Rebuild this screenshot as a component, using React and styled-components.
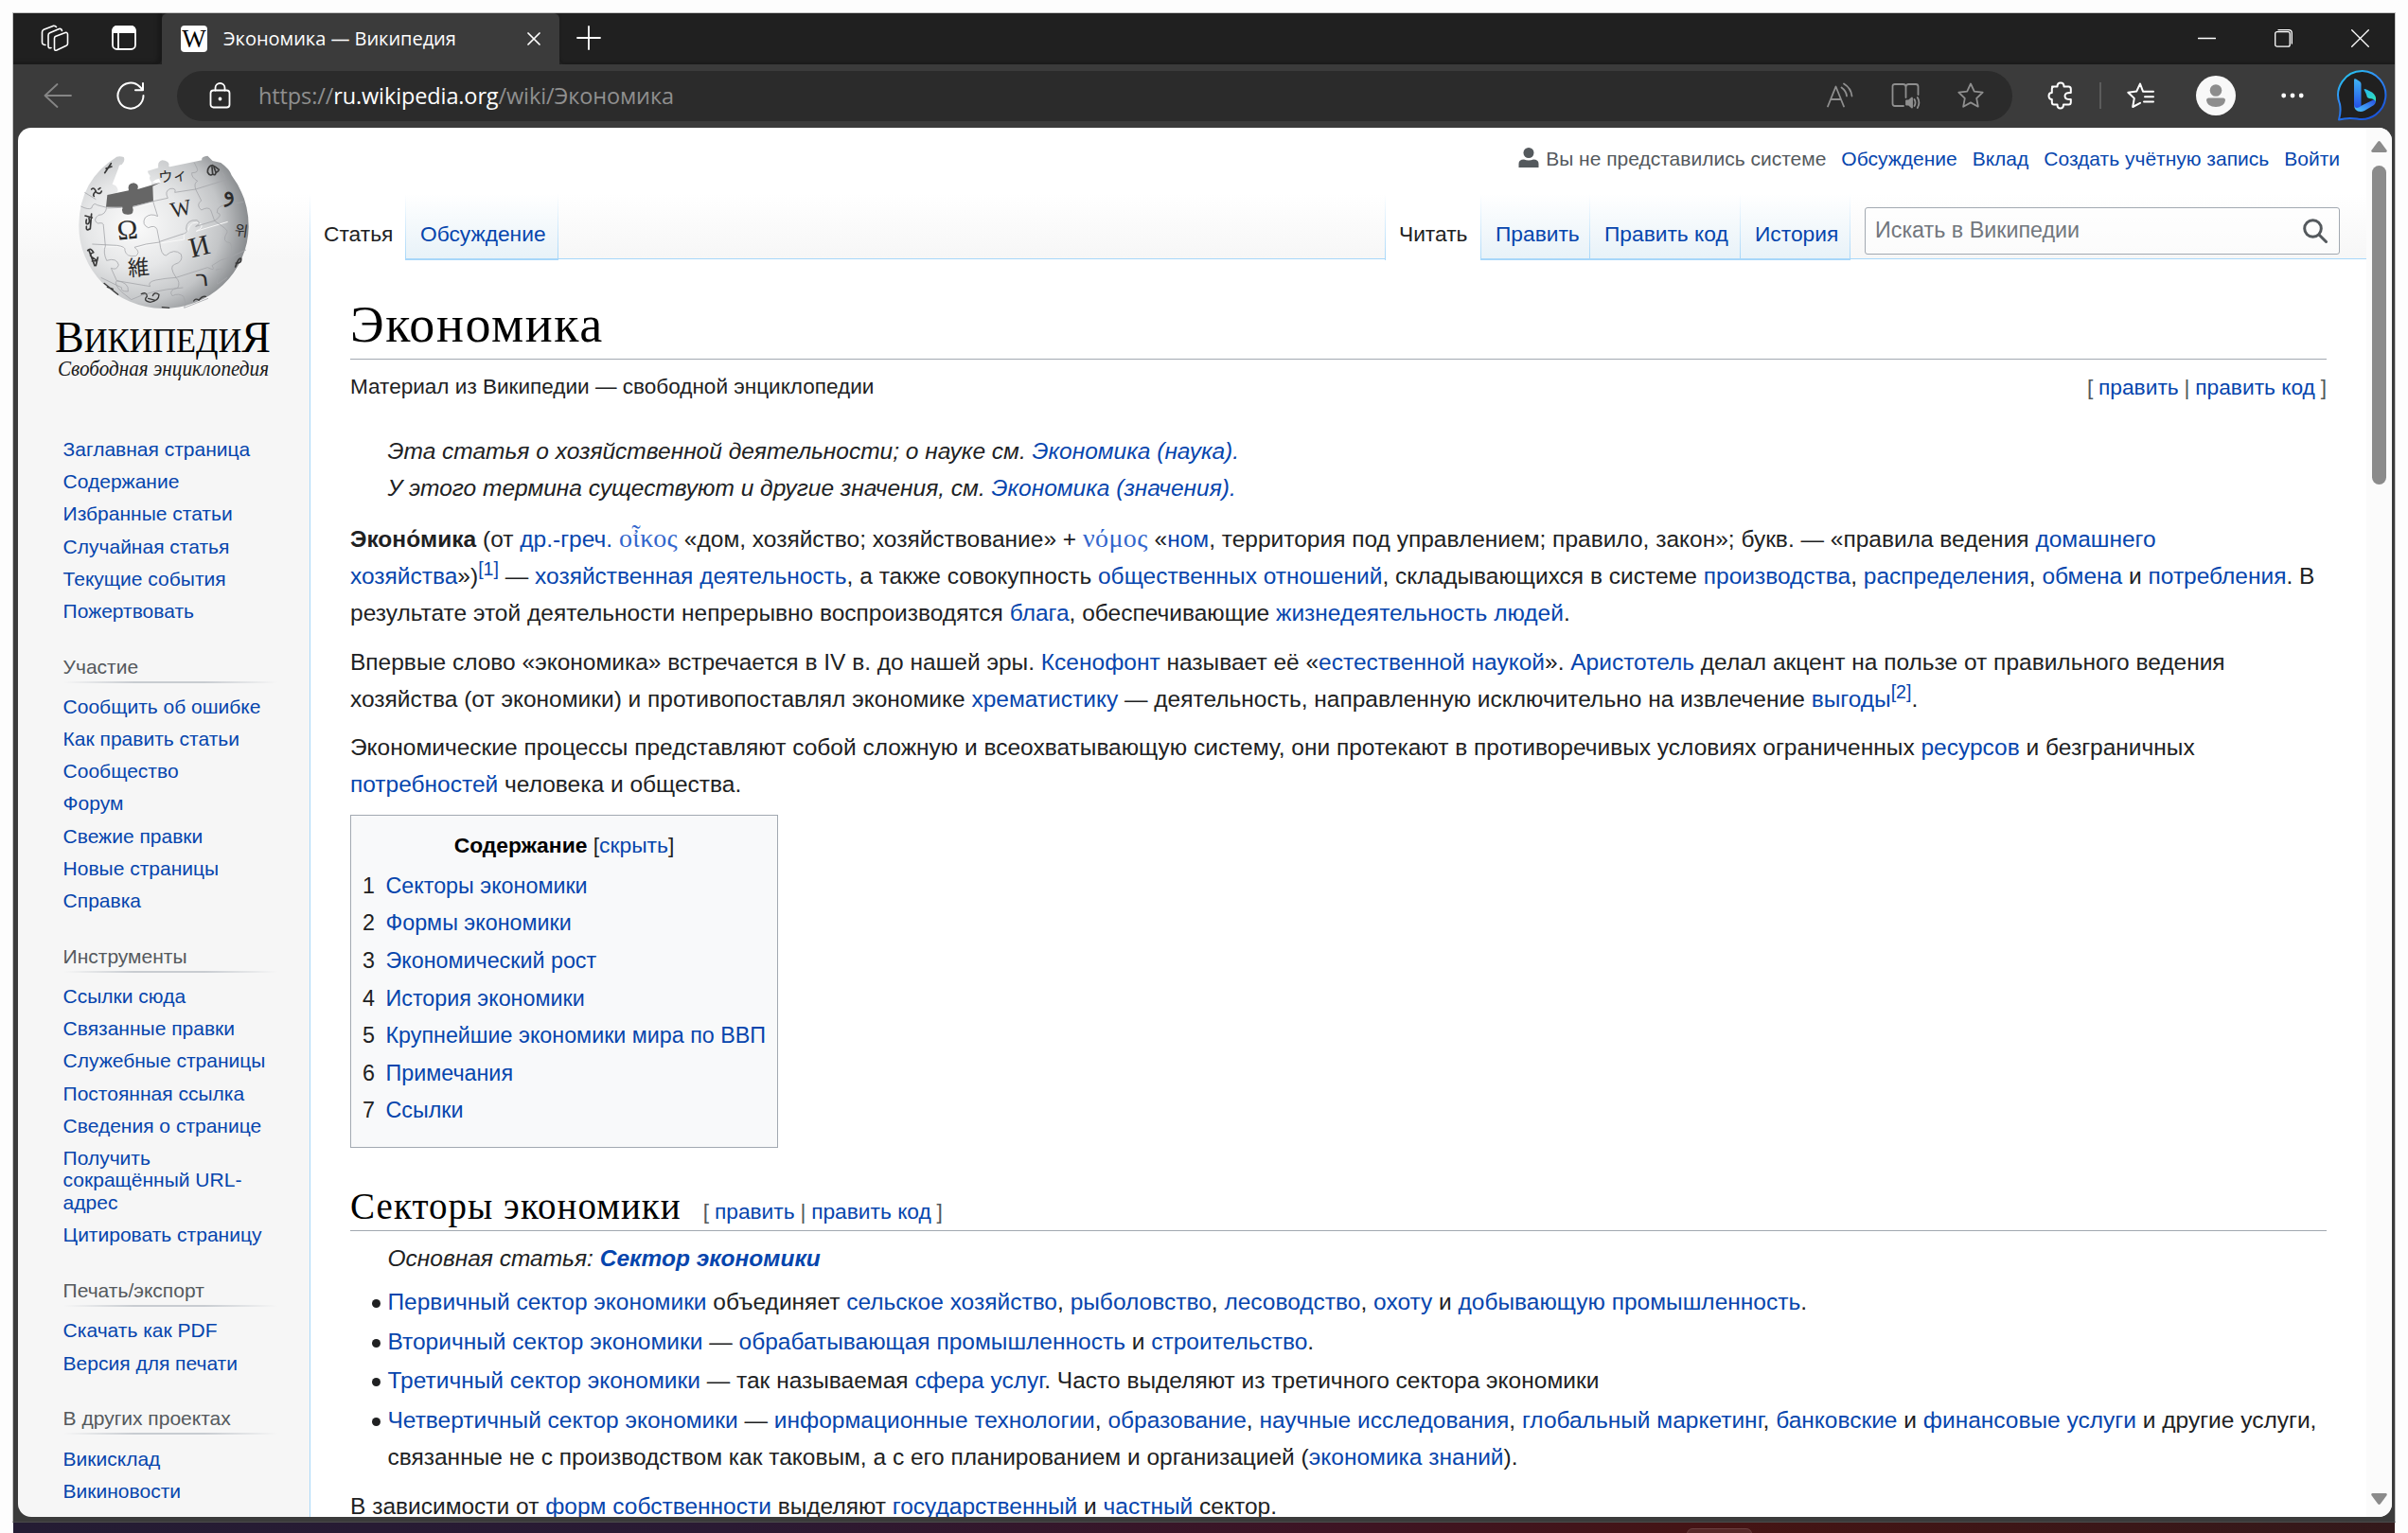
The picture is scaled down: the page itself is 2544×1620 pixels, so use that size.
import React from 'react';
import styled, { createGlobalStyle, css } from 'styled-components';

const SANS = '"Liberation Sans", Arial, sans-serif';
const SERIF = '"Liberation Serif", Georgia, serif';
const UI = '"Open Sans", "Noto Sans", sans-serif';
const LINK = '#0645ad';
const LINE = '#a7d7f9';

const Global = createGlobalStyle`
  * { box-sizing: border-box; }
  html, body { margin: 0; padding: 0; background: #fff; overflow: hidden; }
  svg { display: block; flex: none; }
`;

const Screen = styled.div`
  width: 2544px;
  height: 1620px;
  padding: 13px 13px 0;
  background: #fdfdfd;
  overflow: hidden;
  display: flex;
  flex-direction: column;
`;

const Window = styled.div`
  height: 1596px;
  flex: none;
  background: #3b3b3b;
  border: 1px solid #c3c3c3;
  border-bottom-color: #4a4a4a;
  display: flex;
  flex-direction: column;
`;

const TitleBar = styled.div`
  height: 54px;
  flex: none;
  display: flex;
  background: #202020;
`;

const TitleTools = styled.div`
  width: 157px;
  padding: 12px 0 0 29px;
  display: flex;
  gap: 45px;
  border-bottom-right-radius: 6px;
  box-shadow: inset -4px -2px 4px rgba(0, 0, 0, 0.25);
`;

const TabCard = styled.div`
  width: 420px;
  height: 54px;
  padding: 0 20px;
  display: flex;
  align-items: center;
  background: #3b3b3b;
  border-radius: 6px 6px 0 0;
`;

const Favicon = styled.span`
  width: 28px;
  height: 28px;
  margin-bottom: 1px;
  border-radius: 4px;
  background: #fff;
  color: #000;
  font: 27px/28px ${SERIF};
  text-align: center;
  display: flex;
  justify-content: center;
`;

const TabTitle = styled.span`
  margin-left: 17px;
  margin-bottom: 1px;
  flex: 1;
  color: #fff;
  font: 20px/30px ${UI};
  letter-spacing: -0.03px;
  white-space: nowrap;
`;

const TitleRest = styled.div`
  flex: 1;
  display: flex;
  justify-content: space-between;
  padding: 13px 27px 0 18px;
  border-bottom-left-radius: 6px;
  box-shadow: inset 0 -2px 3px rgba(0, 0, 0, 0.2);
`;

const WindowButtons = styled.div`
  display: flex;
  gap: 62px;
  padding-top: 4px;
`;

const Toolbar = styled.div`
  height: 67px;
  flex: none;
  display: flex;
  align-items: center;
  padding: 0 5px 1px 32px;
`;

const Spaced = styled.div`
  margin-left: ${(p) => p.$ml}px;
  flex: none;
`;

const UrlField = styled.div`
  width: 1939px;
  flex: none;
  height: 53px;
  margin-left: 34px;
  padding: 0 30px 0 34px;
  border-radius: 27px;
  background: #2b2b2b;
  display: flex;
  align-items: center;
`;

const Url = styled.div`
  flex: 1;
  margin-left: 29px;
  color: #8f8f8f;
  font: 23.5px/34px ${UI};
  letter-spacing: -0.12px;
  white-space: nowrap;
  b { font-weight: 400; color: #fff; }
`;

const ToolDivider = styled.div`
  width: 2px;
  height: 28px;
  margin-left: 28px;
  background: #5c5c5c;
`;

const Page = styled.div`
  height: 1468px;
  flex: none;
  margin: 0 3px 0 5px;
  border-radius: 14px;
  overflow: hidden;
  display: flex;
  background: linear-gradient(#fff 70px, #f6f6f6 140px);
  font-family: ${SANS};
`;

const Sidebar = styled.aside`
  width: 308px;
  flex: none;
`;

const Nav = styled.nav`
  padding: 23px 0 0 47.6px;
`;

const Portal = styled.section`
  & + & { padding-top: 24px; }
`;

const PortalTitle = styled.h3`
  margin: 0 0 8.4px;
  width: 226px;
  height: 35px;
  font-weight: 400;
  font-size: 21px;
  line-height: 35px;
  color: #54595d;
  background: linear-gradient(to right, rgba(200, 204, 209, 0), #c8ccd1 33%, #c8ccd1 66%, rgba(200, 204, 209, 0)) 0 100% / 100% 2px no-repeat;
`;

const NavItem = styled.a`
  display: block;
  width: 226px;
  padding: 5.25px 0;
  font-size: 21px;
  line-height: 23.6px;
  color: ${LINK};
`;

const Main = styled.main`
  flex: 1;
  min-width: 0;
  display: flex;
  flex-direction: column;
`;

const Personal = styled.div`
  height: 70px;
  flex: none;
  display: flex;
  justify-content: flex-end;
  gap: 16px;
  padding: 21px 28px 0 0;
  font-size: 21px;
  line-height: 24px;
  color: ${LINK};
  white-space: nowrap;
`;

const Anonymous = styled.span`
  display: flex;
  gap: 7px;
  color: #54595d;
`;

const TabsRow = styled.div`
  height: 70px;
  flex: none;
  margin-bottom: -2px;
  position: relative;
  display: flex;
  justify-content: space-between;
`;

const TabGroup = styled.div`
  display: flex;
`;

const PageTab = styled.div`
  height: 70px;
  width: ${(p) => p.$w}px;
  padding: 28px 0 0 15px;
  font-size: 22.75px;
  line-height: 28px;
  white-space: nowrap;
  color: ${(p) => (p.$on ? '#202122' : LINK)};
  ${(p) =>
    p.$on
      ? css`background: linear-gradient(#fff, ${LINE}) 0 0 / 1px 100% no-repeat, linear-gradient(#fff, ${LINE}) 100% 0 / 1px 100% no-repeat, #fff;`
      : css`
          background: linear-gradient(#fff, ${LINE}) 100% 0 / 1px 100% no-repeat, linear-gradient(#fff, #e8f2f8);
          border-bottom: 2px solid ${LINE};
        `}
`;

const RightTools = styled.div`
  display: flex;
  padding-right: 28px;
`;

const Search = styled.div`
  width: 502px;
  height: 50px;
  margin: 14px 0 0 15px;
  padding: 0 12px 1px 10px;
  border: 1px solid #a2a9b1;
  border-radius: 3px;
  background: rgba(255, 255, 255, 0.5);
  display: flex;
  align-items: center;
  justify-content: space-between;
  font-size: 23.3px;
  color: #72777d;
`;

const Article = styled.article`
  flex: 1;
  padding: 36px 42px 0;
  background: #fff;
  border-left: 1px solid ${LINE};
  border-top: 1px solid ${LINE};
  color: #202122;
  font-size: 24.5px;
  line-height: 39.2px;
  a { color: ${LINK}; }
  p { margin: 12.25px 0; }
  sup { font-size: 19.6px; line-height: 1; vertical-align: super; color: ${LINK}; }
`;

const Heading = styled.div`
  display: flex;
  align-items: baseline;
  height: ${(p) => p.$h}px;
  border-bottom: 1px solid #a2a9b1;
  h1, h2 {
    margin: 0;
    font-family: ${SERIF};
    font-weight: 400;
    color: #000;
    font-size: ${(p) => p.$size}px;
    line-height: ${(p) => p.$lh}px;
    letter-spacing: ${(p) => p.$ls}px;
  }
`;

const Edit = styled.span`
  margin-left: ${(p) => p.$ml || 0}px;
  padding-top: ${(p) => p.$pt || 0}px;
  font-size: 22.75px;
  color: #54595d;
  white-space: pre;
  i { font-style: normal; padding: 0 5.8px; }
`;

const Tagline = styled.div`
  display: flex;
  justify-content: space-between;
  padding-top: 9px;
  height: 77px;
  font-size: 22.56px;
`;

const Hatnote = styled.div`
  padding-left: 39.5px;
  font-style: italic;
`;

const Lead = styled.div`
  padding-top: 2px;
  overflow: hidden;
  margin-bottom: 12.25px;
  p:last-child { margin-bottom: 0; }
`;

const Greek = styled.span`
  font-family: ${SERIF};
  font-size: 28px;
  letter-spacing: 0.4px;
  line-height: 1;
  color: #36c;
`;

const Toc = styled.div`
  width: 452px;
  height: 352px;
  padding: 12px 12px 0;
  border: 1px solid #a2a9b1;
  background: #f8f9fa;
`;

const TocTitle = styled.div`
  height: 43px;
  text-align: center;
  font-size: 22.85px;
  b { color: #000; }
`;

const TocRow = styled.div`
  display: grid;
  grid-template-columns: 24.5px 1fr;
  height: 39.6px;
  white-space: nowrap;
  font-size: 23.3px;
`;

const SectionNote = styled(Hatnote)`
  padding-top: 9px;
`;

const Bullets = styled.ul`
  margin: 7px 0 0 39.5px;
  padding: 0;
  list-style: none;
  li { margin-bottom: 2.45px; position: relative; }
  li::before {
    content: '';
    position: absolute;
    left: -17px;
    top: 17px;
    width: 9px;
    height: 9px;
    border-radius: 50%;
    background: #202122;
  }
`;

const ScrollTrack = styled.div`
  width: 27px;
  flex: none;
  background: #fbfbfb;
  display: flex;
  flex-direction: column;
  align-items: center;
  padding: 14px 1px 13px 0;
`;

const Thumb = styled.div`
  width: 15px;
  height: 337px;
  margin: 14px 0 auto;
  border-radius: 8px;
  background: #8b8b8b;
`;

const Desktop = styled.div`
  flex: 1;
  margin: 0 1px;
  padding: 6px 0 0 1768px;
  background: linear-gradient(to right, #241c33, #2a1a33 30%, #3d1424 55%, #451414 72%, #33191b);
`;

const TaskbarButton = styled.div`
  width: 69px;
  height: 12px;
  border-radius: 6px;
  border: 1px solid #6b4040;
  background: #552828;
`;

function rich(text) {
  return text.split(/(\[\[.*?\]\]|\{\{.*?\}\}|\^\^.*?\^\^)/).map((part, i) => {
    if (part.startsWith('[[')) return <a key={i}>{part.slice(2, -2)}</a>;
    if (part.startsWith('{{')) return <Greek key={i}>{part.slice(2, -2)}</Greek>;
    if (part.startsWith('^^')) return <sup key={i}>{part.slice(2, -2)}</sup>;
    return part;
  });
}

const Icon = ({ w = 28, h = 28, c = '#fff', sw = 1.8, children, vb }) => (
  <svg width={w} height={h} viewBox={vb || `0 0 ${w} ${h}`} fill="none" stroke={c} strokeWidth={sw} strokeLinecap="round" strokeLinejoin="round">
    {children}
  </svg>
);

const Workspaces = () => (
  <Icon w={30} h={29} sw={1.6}>
    <path d="M15.500 12.500 L26 8.500 Q28.500 8 28.500 10.500 V20 Q28.500 21.500 27 22.300 L17 27 Q14.500 28 14.500 25.500 V14.500 Q14.500 13 15.500 12.500Z" />
    <path d="M11 24.500 Q8 25.500 8 22.500 V11.500 Q8 9.500 9.500 8.800 L19.500 4.500 Q22 4 22.500 6.500" />
    <path d="M5 21.500 Q1.500 21.500 1.500 18.500 V8 Q1.500 6 3.200 5.200 L13 1.400 Q15 1 16.500 2.500" />
  </Icon>
);

const VerticalTabs = () => (
  <Icon w={26} h={27}>
    <rect x="1" y="2" width="24" height="24" rx="4.500" />
    <path d="M1.500 8 V6 Q1.500 2 6 2 H20 Q24.500 2 24.500 6 V8Z" fill="#fff" />
    <path d="M7 8 V26" />
  </Icon>
);

const starPath = 'M14 1.500 L17.800 9.600 L26.700 10.700 L20.200 16.900 L21.800 25.700 L14 21.400 L6.200 25.700 L7.800 16.900 L1.300 10.700 L10.200 9.600Z';

const Bing = () => (
  <svg width="56" height="58" viewBox="0 0 56 58">
    <defs>
      <linearGradient id="ring" x1="0" y1="0" x2="0.600" y2="1">
        <stop offset="0" stopColor="#25d3ee" />
        <stop offset="0.450" stopColor="#2f8cf5" />
        <stop offset="1" stopColor="#1a56dc" />
      </linearGradient>
      <linearGradient id="stem" x1="0" y1="0" x2="0" y2="1">
        <stop offset="0" stopColor="#3fb6f6" />
        <stop offset="1" stopColor="#2450e6" />
      </linearGradient>
      <linearGradient id="bowl" x1="0" y1="1" x2="1" y2="0">
        <stop offset="0" stopColor="#4cc8fa" />
        <stop offset="0.500" stopColor="#3a8cf2" />
        <stop offset="1" stopColor="#2547dc" />
      </linearGradient>
      <linearGradient id="leaf" x1="0" y1="0" x2="1" y2="1">
        <stop offset="0" stopColor="#28b4f0" />
        <stop offset="1" stopColor="#2ee6b4" />
      </linearGradient>
    </defs>
    <path d="M28 3 A25.500 25.500 0 1 1 22 53.500 Q12 52 3 54.500 Q5.500 46 4 38 A25.500 25.500 0 0 1 28 3Z" fill="#202020" stroke="url(#ring)" strokeWidth="2" strokeLinejoin="round" />
    <path d="M19 38 Q19 46 26 46 Q28 46 30 45 L40 39 Q43 36 41.500 32.500 L26 40Z" fill="url(#bowl)" />
    <path d="M29.500 22.500 Q30 21.500 32 22.500 L38 25.500 Q43 29 42 35.500 Q40.500 32 35 32 L33 31 Q32 27 29.500 22.500Z" fill="url(#leaf)" />
    <path d="M19 12.500 Q19 10.500 21 11.500 L25 14 Q26.500 15 26.500 17 V40 Q20 44.500 19 38.500Z" fill="url(#stem)" />
  </svg>
);

const globeGlyphs = [
  ['Ω', 227, 308, 88, -6, SERIF],
  ['W', 398, 234, 70, -12, SERIF],
  ['И', 459, 360, 90, -14, SERIF],
  ['維', 261, 422, 68, -5, '"Noto Sans CJK JP"'],
  ['ウィ', 370, 124, 46, -6, '"Noto Sans CJK JP"'],
  ['و', 548, 182, 80, -16, '"DejaVu Sans"'],
  ['위', 583, 298, 46, 8, '"Noto Sans CJK KR"'],
  ['ר', 463, 458, 72, -6, '"DejaVu Sans"'],
];

const Logo = () => (
  <svg width="308" height="300" viewBox="19 135 308 300">
    <defs>
      <radialGradient id="ball" cx="0.330" cy="0.450" r="0.680">
        <stop offset="0" stopColor="#fbfbfb" />
        <stop offset="0.420" stopColor="#e6e7e8" />
        <stop offset="0.750" stopColor="#c3c5c7" />
        <stop offset="1" stopColor="#85888b" />
      </radialGradient>
    </defs>
    <g transform="translate(60 150) scale(0.33333)">
      <path
        d="M190 47 Q200 44 212 48 Q218 60 206 72 Q196 72 196 82 L176 134 Q190 136 194 152 Q192 166 178 164 Q164 164 160 176 L158 208 L304 188 L300 128 L330 130 L324 116 Q312 118 302 128 Q290 120 296 108 Q288 100 288 92 L322 82 Q318 62 334 58 Q354 60 356 72 Q352 80 362 78 L460 58 Q456 46 478 44 L494 60 L520 66 Q548 86 554 106 A269 269 0 0 1 608 270 A269 262 0 1 1 70 262 Q72 120 190 47Z"
        fill="url(#ball)"
      />
      <path d="M160 168 L228 154 Q222 132 244 130 Q262 134 256 150 L330 128 L304 140 L306 188 L240 204 Q248 232 224 230 Q202 230 208 206 L156 206Z" fill="#666" />
      <g fill="none" stroke="#f8f8f8" strokeWidth="3" transform="translate(2 3)">
        <path d="M160 210 L206 208 M240 206 L305 190 L320 236 Q298 224 280 240 Q268 262 290 272 Q312 262 318 278 L326 318 Q280 322 246 334 Q268 350 250 362 Q220 366 216 344 Q220 332 190 328 L144 330" />
        <path d="M326 318 L402 306 Q396 286 412 280 Q424 240 456 258 Q462 270 440 280 L540 250" />
      </g>
      <g fill="none" stroke="#a3a5a8" strokeWidth="2.400" strokeLinejoin="round">
        <path d="M160 210 L206 208 M240 206 L305 188 L320 236 Q298 224 280 240 Q268 262 290 272 Q312 262 318 278 L326 318 Q280 322 246 334 Q268 350 250 362 Q220 366 216 344 Q220 332 190 328 L112 324" />
        <path d="M305 188 L352 178 Q340 156 360 148 Q380 146 374 160 L440 150 Q434 130 446 124 Q426 112 428 98 Q452 98 444 82 L436 66" />
        <path d="M440 150 L458 186 Q440 200 458 216 Q480 204 488 216 L500 250 L440 268 Q460 258 444 248 Q410 246 410 276 Q420 288 392 294 L326 316 Q330 360 346 360 Q372 336 394 356 Q402 380 374 388 Q354 394 378 430 Q344 432 314 438 Q286 444 296 458 L190 440" />
        <path d="M440 150 L530 122 Q536 108 524 96 M530 122 Q556 190 548 198 Q506 200 508 224 Q530 230 500 250 M548 198 L592 190 M500 250 Q546 280 540 286 Q520 318 550 320 Q560 346 548 366 Q520 370 492 392 Q506 412 478 398 L378 430 Q392 444 384 462 Q352 470 366 488 Q386 478 402 490 Q412 510 404 526" />
        <path d="M76 204 Q100 216 110 210 Q116 190 128 200 L158 208 Q154 232 132 232 Q112 248 130 258 Q150 254 148 266 L154 330 Q146 350 158 376 Q190 366 196 390 Q190 408 172 400 L190 440 Q230 446 226 474 Q200 474 206 462 L140 430 M190 440 Q180 450 206 476 L236 500 Q296 470 400 462 M88 160 L124 182 M548 366 L600 342 M504 406 Q524 398 530 410 Q500 440 510 450 L540 430 M404 526 L480 496" />
      </g>
      <g fill="#2b2b2b" textAnchor="middle">
        {globeGlyphs.map(([ch, x, y, size, rot, family]) => (
          <text key={ch} fontFamily={family} fontSize={size} transform={`translate(${x} ${y}) rotate(${rot})`}>{ch}</text>
        ))}
      </g>
      <g fill="none" stroke="#3a3a3a" strokeWidth="5" strokeLinecap="round">
        <path d="M478 96 Q478 76 494 74 Q504 78 514 88 M478 96 Q486 110 494 102 L492 80 M494 102 Q504 108 504 96 L498 80 M504 98 L512 92" />
        <path d="M152 98 L172 68 M156 84 L174 78 M110 150 Q118 142 124 156 Q112 168 118 172 M126 160 Q138 168 142 156 M132 150 L138 146" />
        <path d="M90 234 L112 240 M94 246 Q90 262 98 260 Q106 256 102 242 M94 268 Q92 284 104 276 M110 228 L106 276" />
        <path d="M98 344 Q108 334 116 350 Q100 356 110 364 L124 374 M102 344 L120 392 M112 378 L128 376 M130 366 L124 392" />
        <path d="M150 448 L194 484 M160 460 L178 466" strokeWidth="4" />
        <path d="M268 482 Q286 474 286 490 Q272 504 296 508 Q324 504 324 484 Q308 474 304 488 M290 496 L312 502" strokeWidth="4" />
        <path d="M334 524 L356 526 M434 504 Q440 494 450 502 Q460 488 472 490" strokeWidth="4" />
        <path d="M566 396 Q576 366 584 370 Q586 386 568 384" strokeWidth="5" />
      </g>
    </g>
    <g fill="#000" fontFamily={SERIF}>
      <text x="58" y="372" fontSize="47" textLength="228" lengthAdjust="spacingAndGlyphs">
        В<tspan fontSize="35">ИКИПЕДИ</tspan>Я
      </text>
      <text x="61" y="397" fontSize="23.500" fontStyle="italic" fill="#1a1a1a" textLength="223" lengthAdjust="spacingAndGlyphs">Свободная энциклопедия</text>
    </g>
  </svg>
);

const portals = [
  [null, ['Заглавная страница', 'Содержание', 'Избранные статьи', 'Случайная статья', 'Текущие события', 'Пожертвовать']],
  ['Участие', ['Сообщить об ошибке', 'Как править статьи', 'Сообщество', 'Форум', 'Свежие правки', 'Новые страницы', 'Справка']],
  ['Инструменты', ['Ссылки сюда', 'Связанные правки', 'Служебные страницы', 'Постоянная ссылка', 'Сведения о странице', 'Получить сокращённый URL-адрес', 'Цитировать страницу']],
  ['Печать/экспорт', ['Скачать как PDF', 'Версия для печати']],
  ['В других проектах', ['Викисклад', 'Викиновости', 'Элемент Викиданных']],
];

const toc = ['Секторы экономики', 'Формы экономики', 'Экономический рост', 'История экономики', 'Крупнейшие экономики мира по ВВП', 'Примечания', 'Ссылки'];

const paragraphs = [
  ' (от [[др.-греч.]] {{οἶκος}} «дом, хозяйство; хозяйствование» + {{νόμος}} «[[ном]], территория под управлением; правило, закон»; букв. — «правила ведения [[домашнего хозяйства]]»)\u2060^^[1]^^\u00a0— [[хозяйственная деятельность]], а также совокупность [[общественных отношений]], складывающихся в системе [[производства]], [[распределения]], [[обмена]] и [[потребления]]. В результате этой деятельности непрерывно воспроизводятся [[блага]], обеспечивающие [[жизнедеятельность людей]].',
  'Впервые слово «экономика» встречается в IV в. до нашей эры. [[Ксенофонт]] называет её «[[естественной наукой]]». [[Аристотель]] делал акцент на пользе от правильного ведения хозяйства (от экономики) и противопоставлял экономике [[хрематистику]]\u00a0— деятельность, направленную исключительно на извлечение [[выгоды]]^^[2]^^.',
  'Экономические процессы представляют собой сложную и всеохватывающую систему, они протекают в противоречивых условиях ограниченных [[ресурсов]] и безграничных [[потребностей]] человека и общества.',
];

const bullets = [
  '[[Первичный сектор экономики]] объединяет [[сельское хозяйство]], [[рыболовство]], [[лесоводство]], [[охоту]] и [[добывающую промышленность]].',
  '[[Вторичный сектор экономики]]\u00a0— [[обрабатывающая промышленность]] и [[строительство]].',
  '[[Третичный сектор экономики]]\u00a0— так называемая [[сфера услуг]]. Часто выделяют из третичного сектора экономики',
  '[[Четвертичный сектор экономики]]\u00a0— [[информационные технологии]], [[образование]], [[научные исследования]], [[глобальный маркетинг]], [[банковские]] и [[финансовые услуги]] и другие услуги, связанные не с производством как таковым, а с его планированием и организацией ([[экономика знаний]]).',
];

const EditLinks = (props) => (
  <Edit {...props}>
    [<i><a>править</a></i>|<i><a>править код</a></i>]
  </Edit>
);

export default function App() {
  return (
    <Screen>
      <Global />
      <Window>
        <TitleBar>
          <TitleTools>
            <Workspaces />
            <VerticalTabs />
          </TitleTools>
          <TabCard>
            <Favicon>W</Favicon>
            <TabTitle>Экономика — Википедия</TabTitle>
            <Icon w={14} h={14} sw={1.7}><path d="M1 1 L13 13 M13 1 L1 13" /></Icon>
          </TabCard>
          <TitleRest>
            <Icon w={26} h={26} sw={1.8}><path d="M13 1 V25 M1 13 H25" /></Icon>
            <WindowButtons>
              <Icon w={19} h={19} sw={1.3}><path d="M0.500 9.500 H18.500" /></Icon>
              <Icon w={19} h={19} sw={1.3}>
                <rect x="0.700" y="2.700" width="15.500" height="15.500" rx="2" />
                <path d="M4 0.700 H15 Q18.300 0.700 18.300 4 V15" />
              </Icon>
              <Icon w={19} h={19} sw={1.3}><path d="M0.700 0.700 L18.300 18.300 M18.300 0.700 L0.700 18.300" /></Icon>
            </WindowButtons>
          </TitleRest>
        </TitleBar>
        <Toolbar>
          <Icon w={30} h={28} c="#858585"><path d="M29 14 H1.500 M14.500 2 L1.500 14 L14.500 26" /></Icon>
          <Spaced $ml={47}>
            <Icon w={30} h={30} sw={2}>
              <path d="M28.500 15 A13.500 13.500 0 1 1 24.500 5.500 L28 9 M28 2 V9.300 H20" />
            </Icon>
          </Spaced>
          <UrlField>
            <Icon w={23} h={28}>
              <rect x="1.500" y="8.500" width="20" height="18" rx="3" />
              <path d="M6.500 8.500 V6 A5 5 0 0 1 16.500 6 V8.500" />
              <circle cx="11.500" cy="17.500" r="1" fill="#fff" />
            </Icon>
            <Url>https://<b>ru.wikipedia.org</b>/wiki/Экономика</Url>
            <Icon w={28} h={28} c="#8f8f8f">
              <path d="M1 25.500 L9.500 4.500 L18 25.500 M4.200 18 H14.800 M15.500 5.500 Q20.500 9 21 14.500 M18 1.500 Q25.500 6 26.500 14.500" />
            </Icon>
            <Spaced $ml={40}>
              <Icon w={31} h={28} c="#8f8f8f">
                <path d="M13 25 H4 Q1.500 25 1.500 22.500 V4 Q1.500 2 4 2 H12.500 Q15.500 2 15.500 5 V16 M15.500 5 Q15.500 2 18.500 2 H26 Q28.500 2 28.500 4.500 V13 M24.500 18 Q26.500 21.500 24.500 25 M27.800 16 Q31 21.500 27.800 27" />
                <path d="M16 19.500 H18.500 L22 16.500 V26.500 L18.500 23.500 H16Z" fill="#8f8f8f" />
              </Icon>
            </Spaced>
            <Spaced $ml={39}>
              <Icon w={28} h={28} c="#8f8f8f"><path d={starPath} /></Icon>
            </Spaced>
          </UrlField>
          <Spaced $ml={37}>
            <Icon w={27} h={30} sw={2}>
              <path d="M5 5.500 H10.500 Q10.500 1.500 14 1.500 Q17.500 1.500 17.500 5.500 H22.500 Q24.800 5.500 24.800 8 V12 Q18.500 11.500 18.500 15.500 Q18.500 19.500 24.800 19 V22 Q24.800 24.500 22.500 24.500 H17 Q17 28.500 13.700 28.500 Q10.500 28.500 10.500 24.500 H7 Q4.800 24.500 4.800 22 V19 Q1.500 19 1.500 15.300 Q1.500 12 4.800 12 V8 Q4.800 5.500 7 5.500" />
            </Icon>
          </Spaced>
          <ToolDivider />
          <Spaced $ml={27}>
            <Icon w={29} h={28} sw={2}>
              <path d="M17 9.600 L14 1.500 L10.200 9.600 L1.300 10.700 L7.800 16.900 L6.200 26 L14 21.800 M18 9.800 H28 M19 15.200 H28 M18 20.600 H28" />
            </Icon>
          </Spaced>
          <Spaced $ml={44}>
            <svg width="42" height="42" viewBox="0 0 42 42">
              <circle cx="21" cy="21" r="21" fill="#f8f8f8" />
              <circle cx="21" cy="15.500" r="6.300" fill="#8d8d8d" />
              <path d="M11 26 Q11 23.500 13.500 23.500 H28.500 Q31 23.500 31 26 Q30 33 21 33 Q12 33 11 26Z" fill="#8d8d8d" />
            </svg>
          </Spaced>
          <Spaced $ml={48}>
            <svg width="24" height="6" viewBox="0 0 24 6" fill="#fff">
              <circle cx="2.700" cy="3" r="2.400" /><circle cx="12" cy="3" r="2.400" /><circle cx="21.200" cy="3" r="2.400" />
            </svg>
          </Spaced>
          <Spaced $ml={34}><Bing /></Spaced>
        </Toolbar>
        <Page>
          <Sidebar>
            <Logo />
            <Nav>
              {portals.map(([title, items], i) => (
                <Portal key={i}>
                  {title && <PortalTitle>{title}</PortalTitle>}
                  {items.map((t) => <NavItem key={t}>{t}</NavItem>)}
                </Portal>
              ))}
            </Nav>
          </Sidebar>
          <Main>
            <Personal>
              <Anonymous>
                <svg width="22" height="22" viewBox="0 0 22 22" fill="#54595d">
                  <circle cx="11" cy="5.500" r="5.500" />
                  <path d="M0.500 21 V17 Q0.500 12.500 6 12.500 Q11 14.500 16 12.500 Q21.500 12.500 21.500 17 V21Z" />
                </svg>
                Вы не представились системе
              </Anonymous>
              <span>Обсуждение</span>
              <span>Вклад</span>
              <span>Создать учётную запись</span>
              <span>Войти</span>
            </Personal>
            <TabsRow>
              <TabGroup>
                <PageTab $on $w={102}>Статья</PageTab>
                <PageTab $w={161}>Обсуждение</PageTab>
              </TabGroup>
              <RightTools>
                <PageTab $on $w={102}>Читать</PageTab>
                <PageTab $w={115}>Править</PageTab>
                <PageTab $w={159}>Править код</PageTab>
                <PageTab $w={116}>История</PageTab>
                <Search>
                  Искать в Википедии
                  <Icon w={26} h={26} c="#54595d" sw={3}>
                    <circle cx="10.500" cy="10.500" r="8.800" />
                    <path d="M17 17 L24.500 24.500" />
                  </Icon>
                </Search>
              </RightTools>
            </TabsRow>
            <Article>
              <Heading $h={70} $size={54} $lh={66} $ls={1.6}><h1>Экономика</h1></Heading>
              <Tagline>
                <span>Материал из Википедии — свободной энциклопедии</span>
                <EditLinks $pt={1} />
              </Tagline>
              <Hatnote>Эта статья о хозяйственной деятельности; о науке см. <a>Экономика (наука).</a></Hatnote>
              <Hatnote>У этого термина существуют и другие значения, см. <a>Экономика (значения).</a></Hatnote>
              <Lead>
                {paragraphs.map((p, i) => (
                  <p key={i}>{i === 0 && <b>Эконо́мика</b>}{rich(p)}</p>
                ))}
              </Lead>
              <Toc>
                <TocTitle><b>Содержание</b> [<a>скрыть</a>]</TocTitle>
                {toc.map((t, i) => (
                  <TocRow key={t}><span>{i + 1}</span><a>{t}</a></TocRow>
                ))}
              </Toc>
              <Heading $h={88} $size={39} $lh={124} $ls={1.05}>
                <h2>Секторы экономики</h2>
                <EditLinks $ml={23} />
              </Heading>
              <SectionNote>Основная статья: <b><a>Сектор экономики</a></b></SectionNote>
              <Bullets>
                {bullets.map((b, i) => <li key={i}>{rich(b)}</li>)}
              </Bullets>
              <p>{rich('В зависимости от [[форм собственности]] выделяют [[государственный]] и [[частный]] сектор.')}</p>
            </Article>
          </Main>
          <ScrollTrack>
            <svg width="17" height="12" viewBox="0 0 17 12" fill="#8b8b8b"><path d="M7 1 Q8.500 -0.800 10 1 L16.700 10 Q17 12 15.500 12 H1.500 Q0 12 0.300 10Z" /></svg>
            <Thumb />
            <svg width="17" height="12" viewBox="0 0 17 12" fill="#8b8b8b"><path d="M7 11 Q8.500 12.800 10 11 L16.700 2 Q17 0 15.500 0 H1.500 Q0 0 0.300 2Z" /></svg>
          </ScrollTrack>
        </Page>
      </Window>
      <Desktop><TaskbarButton /></Desktop>
    </Screen>
  );
}
